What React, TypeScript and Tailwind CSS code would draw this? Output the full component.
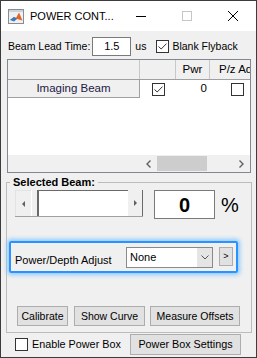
import type { ReactNode } from "react";

function CheckBox({ checked = false }: { checked?: boolean }) {
  return (
    <span className="flex h-[13px] w-[13px] shrink-0 items-center justify-center border border-[#333333] bg-white">
      {checked ? (
        <svg width="9" height="7" viewBox="0 0 9 7">
          <path d="M0.5 3.5 L3.2 6 L8.5 0.6" fill="none" stroke="#333333" strokeWidth="1" />
        </svg>
      ) : null}
    </span>
  );
}

function Button({ children, className }: { children: ReactNode; className: string }) {
  return (
    <div
      className={`flex items-center justify-center border border-[#adadad] bg-[#e1e1e1] leading-none whitespace-nowrap ${className}`}
    >
      {children}
    </div>
  );
}

function MatlabIcon() {
  return (
    <svg width="16" height="15" viewBox="0 0 16 15">
      <rect x="0.5" y="0.5" width="15" height="14" fill="#eef1f4" stroke="#8c8c8c" />
      <rect x="1" y="1" width="14" height="2" fill="#c9d3dc" />
      <path d="M2 11 L6 8 L8 9 L11 3.5 L14.5 11.5 L9 10 Z" fill="#e0662a" />
      <path d="M2 11 L6 8 L8 9 L9 10 L6 12.5 Z" fill="#3a7bbf" />
    </svg>
  );
}

function TitleBar() {
  return (
    <div className="flex h-[30px] shrink-0 items-center bg-white">
      <div className="ml-[7px] flex">
        <MatlabIcon />
      </div>
      <span className="ml-[6px] text-[11px] leading-none">POWER CONT...</span>
      <div className="ml-auto flex h-full">
        <div className="flex h-full w-[46px] items-center justify-center">
          <svg width="10" height="10" viewBox="0 0 10 10">
            <path d="M0 5.5 H10" stroke="#000" strokeWidth="1" />
          </svg>
        </div>
        <div className="flex h-full w-[46px] items-center justify-center">
          <svg width="10" height="10" viewBox="0 0 10 10">
            <rect x="0.5" y="0.5" width="9" height="9" fill="none" stroke="#c6c6c6" />
          </svg>
        </div>
        <div className="flex h-full w-[46px] items-center justify-center">
          <svg width="10" height="10" viewBox="0 0 10 10">
            <path d="M0 0 L10 10 M10 0 L0 10" stroke="#000" strokeWidth="1" />
          </svg>
        </div>
      </div>
    </div>
  );
}

function BeamTable() {
  return (
    <div className="mt-[3px] ml-[6px] flex h-[114px] w-[244px] flex-col overflow-hidden border border-[#828790] bg-white text-[11.5px]">
      <div className="flex h-[20px] shrink-0 border-b border-[#a0a0a0] bg-[#f0f0f0]">
        <div className="w-[132px] border-r border-[#c8c8c8]" />
        <div className="w-[36px] border-r border-[#c8c8c8]" />
        <div className="flex w-[34px] items-center justify-center border-r border-[#c8c8c8]">Pwr</div>
        <div className="flex flex-1 items-center overflow-hidden pl-[9px] whitespace-nowrap">P/z Adj</div>
      </div>
      <div className="flex h-[18px] shrink-0">
        <div className="flex w-[132px] items-center justify-center border-r border-b border-[#a0a0a0] bg-[#f0f0f0] text-[#241a44]">
          Imaging Beam
        </div>
        <div className="flex w-[36px] items-center justify-center">
          <CheckBox checked />
        </div>
        <div className="flex w-[34px] items-center justify-end pr-[3px]">0</div>
        <div className="flex flex-1 items-center pl-[21px]">
          <CheckBox />
        </div>
      </div>
      <div className="flex-1" />
      <div className="flex h-[17px] shrink-0 bg-[#f0f0f0]">
        <div className="w-[132px]" />
        <div className="flex flex-1 items-center">
          <div className="flex h-full w-[17px] items-center justify-center">
            <svg width="5" height="8" viewBox="0 0 5 8">
              <path d="M4.5 0.5 L1 4 L4.5 7.5" fill="none" stroke="#606060" strokeWidth="1.4" />
            </svg>
          </div>
          <div className="h-[15px] w-[50px] bg-[#cdcdcd]" />
          <div className="flex-1" />
          <div className="flex h-full w-[17px] items-center justify-center">
            <svg width="5" height="8" viewBox="0 0 5 8">
              <path d="M0.5 0.5 L4 4 L0.5 7.5" fill="none" stroke="#606060" strokeWidth="1.4" />
            </svg>
          </div>
        </div>
      </div>
    </div>
  );
}

function Slider() {
  return (
    <div className="ml-[6px] flex h-[27px] w-[128px] border-b border-[#a0a0a0]">
      <div className="flex w-[16px] items-center justify-center border-t border-l border-[#e3e3e3] bg-[#f0f0f0]">
        <svg width="3" height="6" viewBox="0 0 3 6">
          <path d="M3 0 L0 3 L3 6 Z" fill="#606060" />
        </svg>
      </div>
      <div className="w-[7px] border-l border-white border-r border-r-[#696969] bg-[#f0f0f0]" />
      <div className="flex-1 border-t border-l border-[#696969] bg-white" />
      <div className="flex w-[15px] items-center justify-center border-r border-[#696969] bg-[#f0f0f0]">
        <svg width="3" height="6" viewBox="0 0 3 6">
          <path d="M0 0 L3 3 L0 6 Z" fill="#606060" />
        </svg>
      </div>
    </div>
  );
}

export default function App() {
  return (
    <div className="box-border flex h-[358px] w-[257px] flex-col overflow-hidden border border-[#3c3c3c] bg-[#f0f0f0] font-['Liberation_Sans',Arial,sans-serif] text-[10.5px] text-black">
      <TitleBar />
      <div className="flex flex-1 flex-col">
        <div className="mt-[6px] flex h-[19px] items-center pl-[7px]">
          <span>Beam Lead Time:</span>
          <div className="ml-[2px] flex h-[19px] w-[39px] items-center justify-center border border-[#7a7a7a] bg-white text-[11px]">
            1.5
          </div>
          <span className="ml-[4px]">us</span>
          <div className="ml-[10px] flex">
            <CheckBox checked />
          </div>
          <span className="ml-[3px]">Blank Flyback</span>
        </div>

        <BeamTable />

        <fieldset className="mt-[2px] ml-[5px] w-[246px] border border-[#bcbcbc] pl-[2px] pb-[6px]">
          <legend className="ml-[1px] px-[3px] text-[11px] leading-[14px] font-bold">Selected Beam:</legend>
          <div className="mt-[1px] flex h-[29px] items-start">
            <Slider />
            <div className="ml-[11px] flex h-[29px] w-[61px] items-center justify-center border border-[#7a7a7a] bg-white text-[20px] leading-none font-bold">
              0
            </div>
            <span className="ml-[6px] self-center text-[20px] leading-none">%</span>
          </div>

          <div className="mt-[22px] flex h-[32px] w-[229px] items-start rounded-[2px] border-2 border-[#2b93ff] pt-[4px] shadow-[0_0_4px_2px_#8fcbff]">
            <span className="mt-[6px] w-[115px] pl-[4px] text-[11px] leading-[14px]">Power/Depth Adjust</span>
            <div className="flex h-[21px] w-[87px] border border-[#8a8a8a] bg-white">
              <span className="flex flex-1 items-center pl-[3px] text-[11px]">None</span>
              <div className="flex w-[15px] items-center justify-center bg-[#e5e5e5]">
                <svg width="8" height="5" viewBox="0 0 8 5">
                  <path d="M0.5 0.5 L4 4 L7.5 0.5" fill="none" stroke="#555" strokeWidth="1" />
                </svg>
              </div>
            </div>
            <Button className="ml-[6px] h-[19px] w-[14px] text-[9px]">&gt;</Button>
          </div>

          <div className="mt-[33px] ml-[8px] flex">
            <Button className="h-[20px] w-[51px]">Calibrate</Button>
            <Button className="ml-[6px] h-[20px] w-[71px]">Show Curve</Button>
            <Button className="ml-[5px] h-[20px] w-[90px]">Measure Offsets</Button>
          </div>
        </fieldset>

        <div className="mt-[1px] flex h-[21px] items-center pl-[14px]">
          <CheckBox />
          <span className="ml-[4px] text-[10.8px]">Enable Power Box</span>
          <Button className="mr-[15px] ml-auto h-[21px] w-[111px] text-[10.8px]">Power Box Settings</Button>
        </div>
      </div>
    </div>
  );
}
